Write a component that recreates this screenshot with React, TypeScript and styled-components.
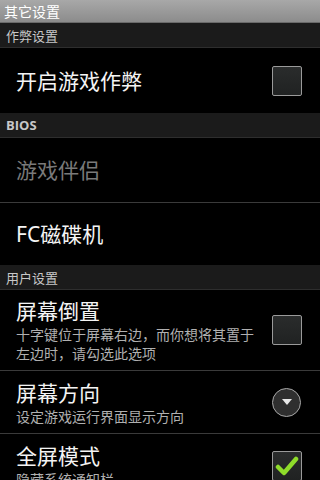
import React from "react";
import styled, { createGlobalStyle } from "styled-components";

const Global = createGlobalStyle`
  html, body { margin: 0; padding: 0; background: #000; }
  body { width: 320px; height: 480px; overflow: hidden; font-family: "Noto Sans CJK SC", "Noto Sans", sans-serif; }
`;

const Screen = styled.div`
  width: 320px;
  height: 480px;
  background: #000;
  display: flex;
  flex-direction: column;
  overflow: hidden;
`;

const TitleBar = styled.div`
  height: 22px;
  flex: none;
  display: flex;
  align-items: center;
  padding-left: 4px;
  background: linear-gradient(#a8a8a8, #8c8c8c);
  border-bottom: 1px solid #6a6a6a;
  color: #fff;
  font-size: 14px;
  line-height: 1;
`;

const Header = styled.div<{ $bold?: boolean }>`
  height: 24px;
  flex: none;
  display: flex;
  align-items: center;
  padding-left: 6px;
  background: #1b1b1b;
  border-bottom: 1px solid #2e2e2e;
  color: #c8c8c8;
  font-size: 13px;
  font-weight: ${(p) => (p.$bold ? 700 : 400)};
  font-family: ${(p) => (p.$bold ? '"Open Sans", "Noto Sans", sans-serif' : "inherit")};
`;

const Row = styled.div<{ $h: number; $divider?: boolean }>`
  height: ${(p) => p.$h}px;
  flex: none;
  display: flex;
  align-items: center;
  padding: 0 18px 0 16px;
  box-sizing: border-box;
  border-bottom: ${(p) => (p.$divider ? "1px solid #3a3a3a" : "none")};
`;

const Texts = styled.div`
  flex: 1;
  display: flex;
  flex-direction: column;
  gap: 0;
`;

const Title = styled.div<{ $disabled?: boolean }>`
  font-size: 21px;
  line-height: 28px;
  color: ${(p) => (p.$disabled ? "#7a7a7a" : "#f4f4f4")};
  font-family: "Noto Sans", "Noto Sans CJK SC", sans-serif;
`;

const Summary = styled.div`
  font-size: 14px;
  line-height: 19px;
  color: #b0b0b0;
  padding-right: 14px;
`;

const Box = styled.div`
  width: 28px;
  height: 28px;
  flex: none;
  border: 1.5px solid #9a9a9a;
  border-radius: 2px;
  background: linear-gradient(#2a2c2c, #202222);
  display: flex;
  align-items: center;
  justify-content: center;
`;

const Circle = styled.div`
  width: 27px;
  height: 27px;
  flex: none;
  border: 1.5px solid #a8a8a8;
  border-radius: 50%;
  background: #2f2f2f;
  display: flex;
  align-items: center;
  justify-content: center;
  margin-right: 1px;
`;

function Check() {
  return (
    <svg width="24" height="22" viewBox="0 0 24 22">
      <path d="M3 12 L9 18 L21 4" fill="none" stroke="#8fdc2a" strokeWidth="4.5" strokeLinecap="round" strokeLinejoin="round" />
    </svg>
  );
}

export default function App() {
  return (
    <>
      <Global />
      <Screen>
        <TitleBar>其它设置</TitleBar>
        <Header>作弊设置</Header>
        <Row $h={65}>
          <Texts>
            <Title>开启游戏作弊</Title>
          </Texts>
          <Box />
        </Row>
        <Header $bold>BIOS</Header>
        <Row $h={65} $divider>
          <Texts>
            <Title $disabled>游戏伴侣</Title>
          </Texts>
        </Row>
        <Row $h={62}>
          <Texts>
            <Title>FC磁碟机</Title>
          </Texts>
        </Row>
        <Header>用户设置</Header>
        <Row $h={81} $divider>
          <Texts>
            <Title>屏幕倒置</Title>
            <Summary>十字键位于屏幕右边，而你想将其置于左边时，请勾选此选项</Summary>
          </Texts>
          <Box />
        </Row>
        <Row $h={63} $divider>
          <Texts>
            <Title>屏幕方向</Title>
            <Summary>设定游戏运行界面显示方向</Summary>
          </Texts>
          <Circle>
            <svg width="12" height="8" viewBox="0 0 12 8">
              <path d="M1 1 L11 1 L6 7 Z" fill="#e8e8e8" />
            </svg>
          </Circle>
        </Row>
        <Row $h={63}>
          <Texts>
            <Title>全屏模式</Title>
            <Summary>隐藏系统通知栏</Summary>
          </Texts>
          <Box>
            <Check />
          </Box>
        </Row>
      </Screen>
    </>
  );
}
